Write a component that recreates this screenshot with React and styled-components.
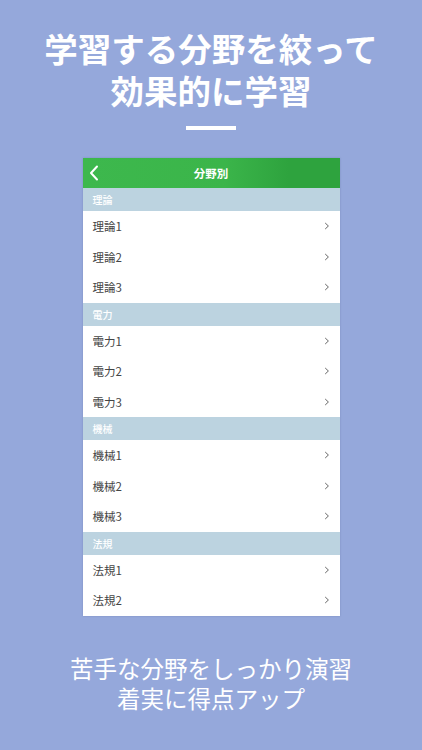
import React from "react";
import styled, { createGlobalStyle } from "styled-components";

const GlobalStyle = createGlobalStyle`
  html, body {
    margin: 0;
    padding: 0;
    background: #95a8db;
  }
  body {
    font-family: "Noto Sans CJK JP", "Noto Sans", sans-serif;
  }
`;

const Page = styled.div`
  width: 422px;
  height: 750px;
  background: #95a8db;
  display: flex;
  flex-direction: column;
  align-items: center;
  overflow: hidden;
`;

const Title = styled.h1`
  margin: 27px 0 0;
  font-size: 33.5px;
  line-height: 42px;
  font-weight: 700;
  color: #ffffff;
  text-align: center;
`;

const Line = styled.span`
  display: block;
  height: 42px;
`;

const Bar = styled.div`
  width: 50px;
  height: 4px;
  margin-top: 15px;
  background: #ffffff;
`;

const Screen = styled.div`
  width: 257px;
  margin-top: 28px;
  background: #ffffff;
  display: flex;
  flex-direction: column;
  box-shadow: 0 0 2px rgba(60, 70, 110, 0.25);
`;

const Header = styled.div`
  height: 30px;
  display: flex;
  align-items: center;
  justify-content: center;
  position: relative;
  background: linear-gradient(90deg, #3db84d 0%, #3bb54a 55%, #2ea33e 80%, #2ea33e 100%);
  color: #ffffff;
  font-size: 11.5px;
  font-weight: 700;
`;

const Back = styled.svg`
  position: absolute;
  left: 6px;
  top: 7px;
`;

const Section = styled.div`
  height: 23px;
  display: flex;
  align-items: center;
  padding-left: 10px;
  background: #bcd3e0;
  color: #ffffff;
  font-size: 10px;
  font-weight: 500;
`;

const Row = styled.div`
  height: 30.5px;
  display: flex;
  align-items: center;
  justify-content: space-between;
  padding: 0 10px;
  color: #444444;
  font-size: 11.5px;
`;

const Chevron = () => (
  <svg width="6" height="8" viewBox="0 0 6 8">
    <path d="M1.2 1 L4.4 4 L1.2 7" fill="none" stroke="#666" strokeWidth="1" />
  </svg>
);

const Caption = styled.p`
  margin: 37px 0 0;
  font-size: 23.5px;
  line-height: 30px;
  font-weight: 400;
  color: #ffffff;
  text-align: center;
`;

const groups = [
  { name: "理論", items: ["理論1", "理論2", "理論3"] },
  { name: "電力", items: ["電力1", "電力2", "電力3"] },
  { name: "機械", items: ["機械1", "機械2", "機械3"] },
  { name: "法規", items: ["法規1", "法規2"] },
];

export default function App() {
  return (
    <>
      <GlobalStyle />
      <Page>
        <Title>
          <Line>学習する分野を絞って</Line>
          <Line>効果的に学習</Line>
        </Title>
        <Bar />
        <Screen>
          <Header>
            <Back width="10" height="16" viewBox="0 0 10 16">
              <path d="M8 1.5 L2 8 L8 14.5" fill="none" stroke="#fff" strokeWidth="2" strokeLinecap="round" strokeLinejoin="round" />
            </Back>
            分野別
          </Header>
          {groups.map((g) => (
            <React.Fragment key={g.name}>
              <Section>{g.name}</Section>
              {g.items.map((it) => (
                <Row key={it}>
                  <span>{it}</span>
                  <Chevron />
                </Row>
              ))}
            </React.Fragment>
          ))}
        </Screen>
        <Caption>
          苦手な分野をしっかり演習
          <br />
          着実に得点アップ
        </Caption>
      </Page>
    </>
  );
}
